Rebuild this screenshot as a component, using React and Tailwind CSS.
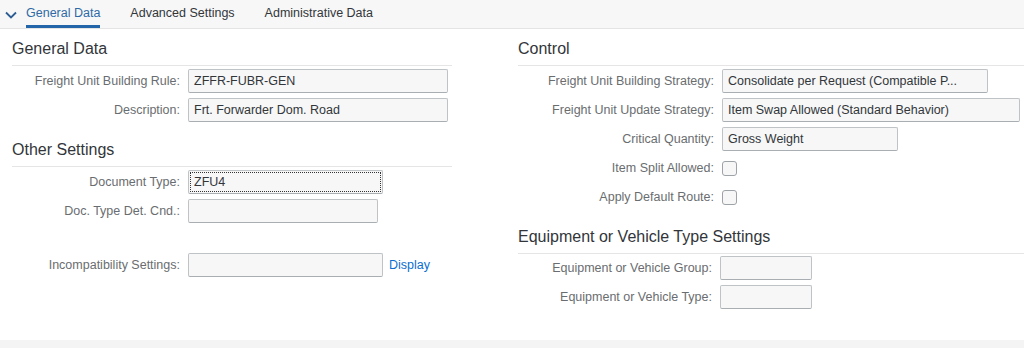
import { ChevronDown } from "lucide-react";

const font = { fontFamily: '"Liberation Sans", Arial, sans-serif' };

const Field = ({ label, labelW, value, w, focus }) => (
  <div className="flex h-[24px] items-center gap-[8px]">
    <div className={`${labelW} text-right text-[12.5px] text-[#6a6d70] whitespace-nowrap`}>{label}</div>
    <div
      className={`${w} h-[24px] flex items-center px-[5px] bg-[#f7f7f7] border border-[#bfc3c6] border-b-[#a9aeb3] rounded-[2px] text-[12.5px] text-[#32363a] whitespace-nowrap overflow-hidden ${focus ? "outline outline-1 outline-dotted outline-[#333] outline-offset-[-3px]" : ""}`}
    >
      {value}
    </div>
  </div>
);

const Check = ({ label }) => (
  <div className="flex h-[24px] items-center gap-[8px]">
    <div className="w-[196px] text-right text-[12.5px] text-[#6a6d70] whitespace-nowrap">{label}</div>
    <div className="w-[15px] h-[15px] rounded-[3px] border border-[#9ea3a8] bg-[#f7f7f7]" />
  </div>
);

const Heading = ({ children, first }) => (
  <div className={`${first ? "pt-[8px]" : "mt-[16px]"} pb-[4px] border-b border-[#e5e5e5]`}>
    <h2 className="text-[16px] leading-[24px] text-[#32363a]">{children}</h2>
  </div>
);

export default function App() {
  const tabs = ["General Data", "Advanced Settings", "Administrative Data"];
  return (
    <div className="h-[348px] flex flex-col bg-white" style={font}>
      <div className="h-[29px] flex items-stretch bg-[#f7f7f7] border-b border-[#e4e4e4] pl-[4px]">
        <div className="flex items-center pt-[1px]">
          <svg width="14" height="14" viewBox="0 0 14 14" className="text-[#2d5d93]">
            <path d="M2 4.5 L7 9.5 L12 4.5" fill="none" stroke="currentColor" strokeWidth="1.8" />
          </svg>
        </div>
        <div className="flex items-stretch gap-[30px] ml-[8px]">
          {tabs.map((t, i) => (
            <div
              key={t}
              className={`flex items-center pt-[2px] border-b-[3px] text-[12.5px] ${i === 0 ? "border-[#2365a8] text-[#2f6aa6]" : "border-transparent text-[#32363a]"}`}
            >
              {t}
            </div>
          ))}
        </div>
      </div>

      <div className="flex-1 grid grid-cols-[512px_1fr]">
        <div className="pl-3 pr-[60px]">
          <Heading first>General Data</Heading>
          <div className="flex flex-col gap-[5px] mt-[3px]">
            <Field label="Freight Unit Building Rule:" labelW="w-[168px]" value="ZFFR-FUBR-GEN" w="w-[260px]" />
            <Field label="Description:" labelW="w-[168px]" value="Frt. Forwarder Dom. Road" w="w-[260px]" />
          </div>
          <Heading>Other Settings</Heading>
          <div className="flex flex-col gap-[5px] mt-[3px]">
            <Field label="Document Type:" labelW="w-[168px]" value="ZFU4" w="w-[195px]" focus />
            <Field label="Doc. Type Det. Cnd.:" labelW="w-[168px]" value="" w="w-[190px]" />
          </div>
          <div className="flex items-center mt-[30px]">
            <Field label="Incompatibility Settings:" labelW="w-[168px]" value="" w="w-[195px]" />
            <span className="ml-[6px] text-[12.5px] text-[#0a6ed1]">Display</span>
          </div>
        </div>

        <div className="pl-[6px]">
          <Heading first>Control</Heading>
          <div className="flex flex-col gap-[5px] mt-[3px]">
            <Field label="Freight Unit Building Strategy:" labelW="w-[196px]" value="Consolidate per Request (Compatible P..." w="w-[266px]" />
            <Field label="Freight Unit Update Strategy:" labelW="w-[196px]" value="Item Swap Allowed (Standard Behavior)" w="w-[298px]" />
            <Field label="Critical Quantity:" labelW="w-[196px]" value="Gross Weight" w="w-[176px]" />
            <Check label="Item Split Allowed:" />
            <Check label="Apply Default Route:" />
          </div>
          <Heading>Equipment or Vehicle Type Settings</Heading>
          <div className="flex flex-col gap-[5px] mt-[2px]">
            <Field label="Equipment or Vehicle Group:" labelW="w-[194px]" value="" w="w-[92px]" />
            <Field label="Equipment or Vehicle Type:" labelW="w-[194px]" value="" w="w-[92px]" />
          </div>
        </div>
      </div>

      <div className="h-[8px] bg-[#f4f4f4]" />
    </div>
  );
}
